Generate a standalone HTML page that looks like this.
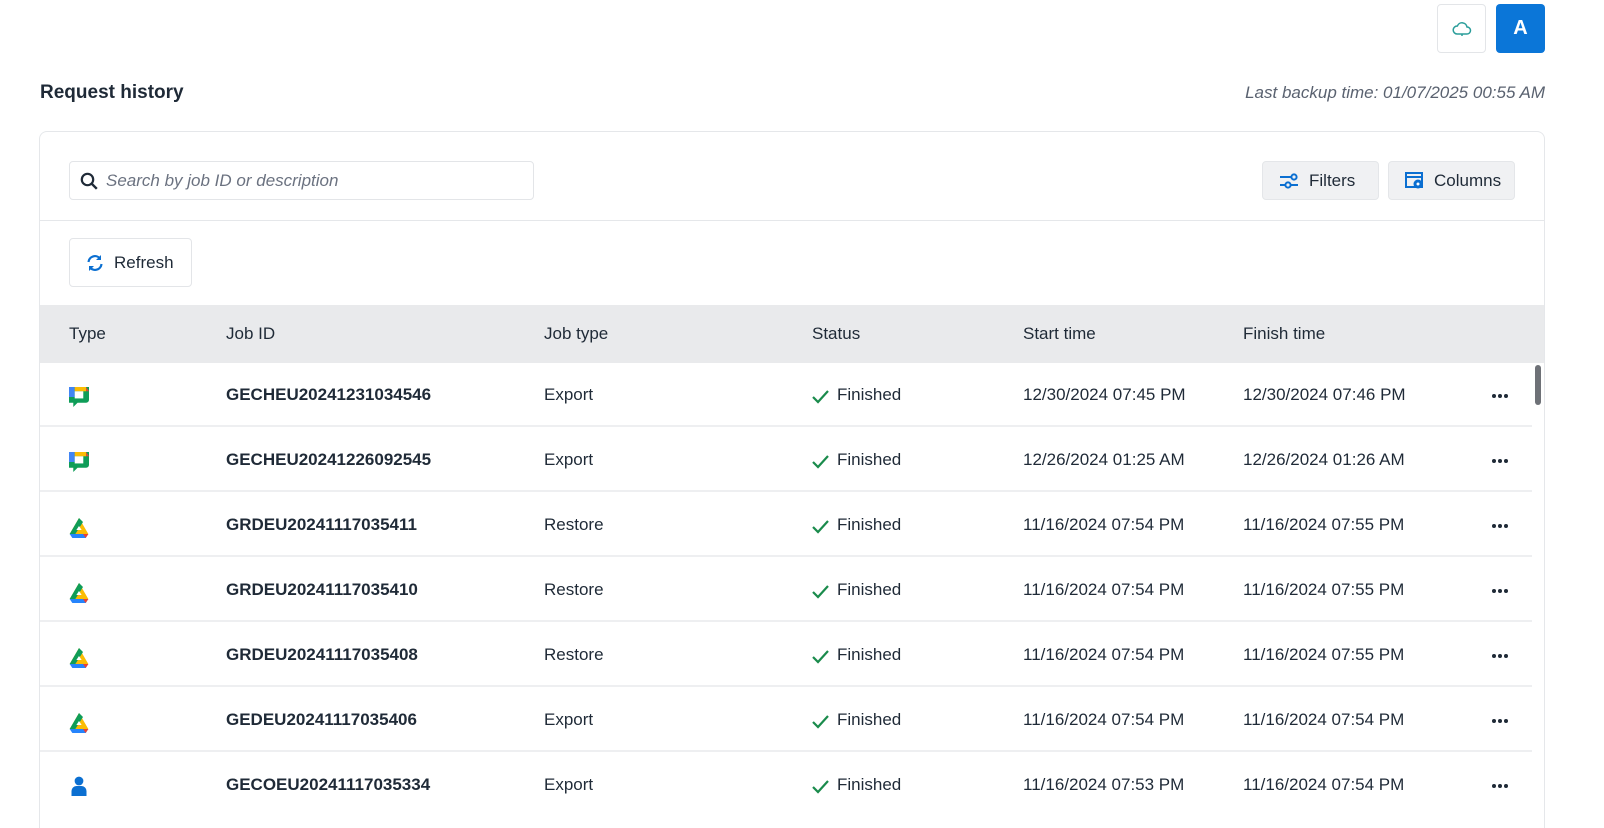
<!DOCTYPE html>
<html><head><meta charset="utf-8"><style>
*{box-sizing:border-box;margin:0;padding:0}
html,body{width:1604px;height:828px;overflow:hidden}
body{background:#fff;font-family:"Liberation Sans",sans-serif;color:#1f2a37;position:relative}
.abs{position:absolute}
.btn{position:absolute;border:1px solid #e3e5e8;border-radius:4px;background:#fff}
.gbtn{position:absolute;background:#f0f1f3;border:1px solid #e4e6e9;border-radius:4px;font-size:17px;display:flex;align-items:center;gap:10px;padding-left:16px}
.card{position:absolute;left:39px;top:131px;width:1506px;height:697px;border:1px solid #e5e7ea;border-bottom:none;border-radius:8px 8px 0 0;overflow:hidden}
.hdr{position:absolute;left:0;top:173px;width:1504px;height:58px;background:#e9eaec;font-size:17px}
.hdr span,.row span{position:absolute}
.row{position:absolute;left:0;width:1492px;height:65px;border-bottom:2px solid #eeeff1;font-size:17px}
.row span{top:23px}
.b{font-weight:bold}
</style></head><body>
<div class="btn" style="left:1437px;top:4px;width:49px;height:49px;display:flex;align-items:center;justify-content:center">
<svg width="20" height="16" viewBox="0 0 20 16"><path d="M5 13h10a3.5 3.5 0 0 0 0-7 5 5 0 0 0-9.6-1A4 4 0 0 0 5 13z" fill="none" stroke="#2a9d9a" stroke-width="1.5"/><path d="M10 13v2" stroke="#2a9d9a" stroke-width="1.5"/></svg></div>
<div class="abs" style="left:1496px;top:4px;width:49px;height:49px;background:#0b76d8;border-radius:4px;color:#fff;font-weight:bold;font-size:20px;display:flex;align-items:center;justify-content:center">A</div>
<div class="abs b" style="left:40px;top:82px;font-size:19px">Request history</div>
<div class="abs" style="right:59px;top:83px;font-size:17px;font-style:italic;color:#5a6270">Last backup time: 01/07/2025 00:55 AM</div>
<div class="card">
<div class="btn" style="left:29px;top:29px;width:465px;height:39px;display:flex;align-items:center;padding-left:10px;gap:8px;font-style:italic;color:#6b7280;font-size:17px">
<svg width="18" height="18" viewBox="0 0 18 18"><circle cx="7.5" cy="7.5" r="5.7" fill="none" stroke="#1f2a37" stroke-width="2.2"/><path d="M11.8 11.8l5 5" stroke="#1f2a37" stroke-width="2.4"/></svg>Search by job ID or description</div>
<div class="gbtn" style="left:1222px;top:29px;width:117px;height:39px"><svg width="20" height="16" viewBox="0 0 20 16"><path d="M1 4h11M1 12h5" stroke="#0b6fd1" stroke-width="2"/><circle cx="15" cy="4" r="2.6" fill="none" stroke="#0b6fd1" stroke-width="2"/><circle cx="9" cy="12" r="2.6" fill="none" stroke="#0b6fd1" stroke-width="2"/><path d="M12 12h7" stroke="#0b6fd1" stroke-width="2"/></svg>Filters</div>
<div class="gbtn" style="left:1348px;top:29px;width:127px;height:39px"><svg width="19" height="17" viewBox="0 0 19 17"><rect x="1" y="1" width="16" height="14" fill="none" stroke="#0b6fd1" stroke-width="2"/><path d="M1 5h16" stroke="#0b6fd1" stroke-width="2"/><circle cx="13" cy="12" r="4.5" fill="#0b6fd1"/><circle cx="13" cy="12" r="1.5" fill="#fff"/></svg>Columns</div>
<div class="abs" style="left:0;top:88px;width:1506px;height:1px;background:#e5e7ea"></div>
<div class="btn" style="left:29px;top:106px;width:123px;height:49px;display:flex;align-items:center;padding-left:16px;gap:10px;font-size:17px">
<svg width="18" height="18" viewBox="0 0 18 18"><path d="M2.5 8a6.5 6.5 0 0 1 11.5-3.5M15.5 10A6.5 6.5 0 0 1 4 13.5" fill="none" stroke="#0b6fd1" stroke-width="2.2"/><path d="M15 1v5h-5zM3 17v-5h5z" fill="#0b6fd1"/></svg>Refresh</div>
<div class="hdr"><span style="left:29px;top:19px">Type</span><span style="left:186px;top:19px">Job ID</span><span style="left:504px;top:19px">Job type</span><span style="left:772px;top:19px">Status</span><span style="left:983px;top:19px">Start time</span><span style="left:1203px;top:19px">Finish time</span></div>
<div class="abs" style="left:1495px;top:233px;width:6px;height:40px;background:#6e7177;border-radius:3px"></div>
</div>
<svg width="0" height="0" style="position:absolute"><defs>
<g id="chat"><path d="M0 0h14v9a2 2 0 0 1-2 2H6l-3 3v-3H0z" fill="#0f9d58"/><path d="M0 0h4v7H0z" fill="#4285f4"/><path d="M4 0h8v3H4z" fill="#fbbc04"/><path d="M12 0l2 3h-2z" fill="#ea4335"/><path d="M4 3h6v5H4z" fill="#fff"/></g>
<g id="drive"><path d="M7 0l7 12H0z" fill="#fbbc04"/><path d="M7 0L0 12l3 2 7-11z" fill="#0f9d58"/><path d="M0 12h14l-2 3H2z" fill="#2684fc"/><path d="M14 12l-2 3-2-3z" fill="#ea4335"/><path d="M5 9h4l-2-3z" fill="#fff"/></g>
<g id="user"><circle cx="7" cy="4" r="3.5" fill="#0b6fd1"/><path d="M1 16v-4a4 4 0 0 1 4-4h4a4 4 0 0 1 4 4v4z" fill="#0b6fd1"/></g>
<g id="chk"><path d="M1 8l5 5L16 2" fill="none" stroke="#1a8b4c" stroke-width="2.2"/></g>
<g id="dots"><circle cx="2" cy="2" r="2" fill="#1f2a37"/><circle cx="8" cy="2" r="2" fill="#1f2a37"/><circle cx="14" cy="2" r="2" fill="#1f2a37"/></g>
</defs></svg>
<div style="position:absolute;left:40px;top:362px">
<div class="row" style="top:0"><svg class="abs" style="left:29px;top:25px" width="20" height="20" viewBox="0 0 14 14"><use href="#chat"/></svg><span class="b" style="left:186px">GECHEU20241231034546</span><span style="left:504px">Export</span><svg class="abs" style="left:772px;top:27px" width="17" height="15"><use href="#chk"/></svg><span style="left:797px">Finished</span><span style="left:983px">12/30/2024 07:45 PM</span><span style="left:1203px">12/30/2024 07:46 PM</span><svg class="abs" style="left:1452px;top:32px" width="16" height="4"><use href="#dots"/></svg></div>
<div class="row" style="top:65px"><svg class="abs" style="left:29px;top:25px" width="20" height="20" viewBox="0 0 14 14"><use href="#chat"/></svg><span class="b" style="left:186px">GECHEU20241226092545</span><span style="left:504px">Export</span><svg class="abs" style="left:772px;top:27px" width="17" height="15"><use href="#chk"/></svg><span style="left:797px">Finished</span><span style="left:983px">12/26/2024 01:25 AM</span><span style="left:1203px">12/26/2024 01:26 AM</span><svg class="abs" style="left:1452px;top:32px" width="16" height="4"><use href="#dots"/></svg></div>
<div class="row" style="top:130px"><svg class="abs" style="left:29px;top:26px" width="20" height="20" viewBox="0 0 14 15"><use href="#drive"/></svg><span class="b" style="left:186px">GRDEU20241117035411</span><span style="left:504px">Restore</span><svg class="abs" style="left:772px;top:27px" width="17" height="15"><use href="#chk"/></svg><span style="left:797px">Finished</span><span style="left:983px">11/16/2024 07:54 PM</span><span style="left:1203px">11/16/2024 07:55 PM</span><svg class="abs" style="left:1452px;top:32px" width="16" height="4"><use href="#dots"/></svg></div>
<div class="row" style="top:195px"><svg class="abs" style="left:29px;top:26px" width="20" height="20" viewBox="0 0 14 15"><use href="#drive"/></svg><span class="b" style="left:186px">GRDEU20241117035410</span><span style="left:504px">Restore</span><svg class="abs" style="left:772px;top:27px" width="17" height="15"><use href="#chk"/></svg><span style="left:797px">Finished</span><span style="left:983px">11/16/2024 07:54 PM</span><span style="left:1203px">11/16/2024 07:55 PM</span><svg class="abs" style="left:1452px;top:32px" width="16" height="4"><use href="#dots"/></svg></div>
<div class="row" style="top:260px"><svg class="abs" style="left:29px;top:26px" width="20" height="20" viewBox="0 0 14 15"><use href="#drive"/></svg><span class="b" style="left:186px">GRDEU20241117035408</span><span style="left:504px">Restore</span><svg class="abs" style="left:772px;top:27px" width="17" height="15"><use href="#chk"/></svg><span style="left:797px">Finished</span><span style="left:983px">11/16/2024 07:54 PM</span><span style="left:1203px">11/16/2024 07:55 PM</span><svg class="abs" style="left:1452px;top:32px" width="16" height="4"><use href="#dots"/></svg></div>
<div class="row" style="top:325px"><svg class="abs" style="left:29px;top:26px" width="20" height="20" viewBox="0 0 14 15"><use href="#drive"/></svg><span class="b" style="left:186px">GEDEU20241117035406</span><span style="left:504px">Export</span><svg class="abs" style="left:772px;top:27px" width="17" height="15"><use href="#chk"/></svg><span style="left:797px">Finished</span><span style="left:983px">11/16/2024 07:54 PM</span><span style="left:1203px">11/16/2024 07:54 PM</span><svg class="abs" style="left:1452px;top:32px" width="16" height="4"><use href="#dots"/></svg></div>
<div class="row" style="top:390px;border:none"><svg class="abs" style="left:30px;top:24px" width="18" height="20" viewBox="0 0 14 16"><use href="#user"/></svg><span class="b" style="left:186px">GECOEU20241117035334</span><span style="left:504px">Export</span><svg class="abs" style="left:772px;top:27px" width="17" height="15"><use href="#chk"/></svg><span style="left:797px">Finished</span><span style="left:983px">11/16/2024 07:53 PM</span><span style="left:1203px">11/16/2024 07:54 PM</span><svg class="abs" style="left:1452px;top:32px" width="16" height="4"><use href="#dots"/></svg></div>
</div>
</body></html>
